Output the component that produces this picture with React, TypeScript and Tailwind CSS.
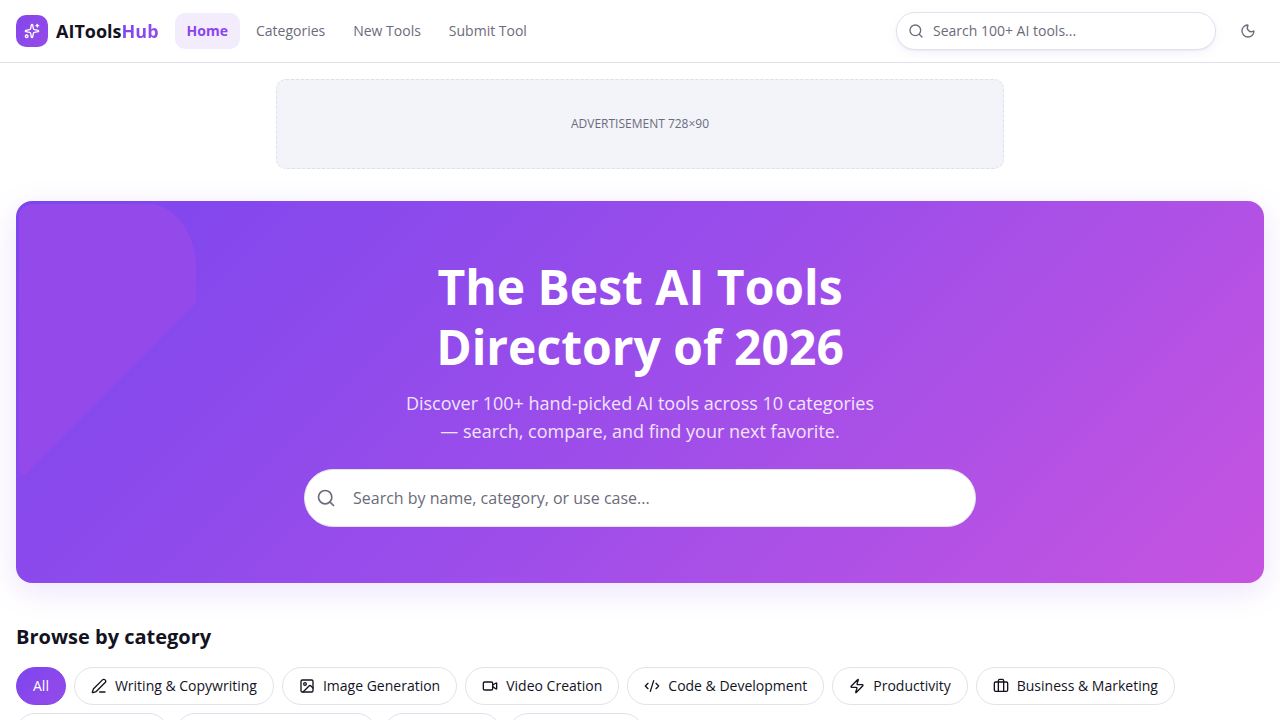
import {
  Briefcase,
  CodeXml,
  GraduationCap,
  Image,
  MessageSquare,
  Microscope,
  Moon,
  Music,
  PenLine,
  Search,
  Sparkles,
  Video,
  Zap,
} from "lucide-react";

const navLinks = ["Home", "Categories", "New Tools", "Submit Tool"];

const categories = [
  { name: "Writing & Copywriting", icon: PenLine },
  { name: "Image Generation", icon: Image },
  { name: "Video Creation", icon: Video },
  { name: "Code & Development", icon: CodeXml },
  { name: "Productivity", icon: Zap },
  { name: "Business & Marketing", icon: Briefcase },
  { name: "Audio & Music", icon: Music },
  { name: "Education & Research", icon: GraduationCap },
  { name: "Chatbots", icon: MessageSquare },
  { name: "Research AI", icon: Microscope },
];

function Header() {
  return (
    <header className="border-b border-[#e2e2ec] bg-white">
      <div className="flex items-center gap-4 px-4 py-3">
        <a href="#" className="flex items-center gap-2">
          <span className="flex size-8 items-center justify-center rounded-[10px] bg-linear-135 from-[#8446ec] to-[#964ae8] text-white">
            <Sparkles className="size-4" />
          </span>
          <span className="text-lg font-bold text-[#13131f]">
            AITools
            <span className="bg-linear-135 from-[#7c45ee] to-[#964ae8] bg-clip-text text-transparent">Hub</span>
          </span>
        </a>

        <nav className="flex items-center gap-1">
          {navLinks.map((label, i) => (
            <a
              key={label}
              href="#"
              className={
                i === 0
                  ? "rounded-[10px] bg-[#f2ecfd] px-3 py-2 text-sm font-bold text-[#8b45ec]"
                  : "rounded-[10px] px-3 py-2 text-sm text-[#6b6b7b]"
              }
            >
              {label}
            </a>
          ))}
        </nav>

        <div className="relative ml-auto w-80">
          <Search className="absolute top-1/2 left-3 size-4 -translate-y-1/2 text-[#6b6b7b]" />
          <input
            type="search"
            aria-label="Search tools"
            placeholder="Search 100+ AI tools..."
            className="block w-full rounded-full border border-[#e2e2ec] bg-white py-2 pr-4 pl-9 text-sm shadow-[0_1px_2px_rgba(20,20,50,0.06),0_4px_12px_rgba(124,58,237,0.06)] placeholder:text-[#6b6b7b]"
          />
        </div>
        <button type="button" aria-label="Toggle theme" className="flex size-8 items-center justify-center text-[#6b6b7b]">
          <Moon className="size-4" />
        </button>
      </div>
    </header>
  );
}

function Hero() {
  return (
    <section className="relative rounded-2xl bg-linear-135 from-[#7c45ee] via-[#9c4dea] to-[#c653e0] px-4 py-14 text-center shadow-[0_8px_32px_rgba(124,58,237,0.14)]">
      {/* Soft shape in the corner */}
      <svg className="absolute top-0 left-0 h-[280px] w-[182px]" viewBox="0 0 182 280" fill="#944aea" aria-hidden="true">
        <path d="M3 12Q6 3 20 3H132C160 3 180 34 180 68V102L9 274Q3 276 3 264Z" />
      </svg>

      <div className="relative">
        <h1 className="mx-auto max-w-xl text-5xl leading-[60px] font-bold text-white">
          The Best AI Tools Directory of 2026
        </h1>
        <p className="mx-auto mt-3 max-w-[480px] text-lg leading-7 text-white/85">
          Discover 100+ hand-picked AI tools across 10 categories — search, compare, and find your next favorite.
        </p>
        <div className="relative mx-auto mt-6 max-w-2xl">
          <Search className="absolute top-1/2 left-3 size-5 -translate-y-1/2 text-[#6b6b7b]" />
          <input
            type="search"
            aria-label="Search by name, category, or use case"
            placeholder="Search by name, category, or use case..."
            className="block w-full rounded-full border border-[#e2e2ec] bg-white py-4 pr-4 pl-12 text-base placeholder:text-[#6b6b7b]"
          />
        </div>
      </div>
    </section>
  );
}

export default function App() {
  return (
    <div className="min-h-screen bg-white font-['Open_Sans',sans-serif] text-[#13131f]">
      <Header />
      <main className="px-4 py-4">
        <div className="mx-auto flex h-[90px] max-w-[728px] items-center justify-center rounded-[10px] border border-dashed border-[#dfdfea] bg-[#f3f4f9] text-xs text-[#6b6b7b]">
          ADVERTISEMENT 728×90
        </div>

        <div className="mt-8">
          <Hero />
        </div>

        <section className="mt-10">
          <h2 className="text-xl leading-7 font-bold">Browse by category</h2>
          <div className="mt-4 flex flex-wrap gap-2">
            <button
              type="button"
              className="rounded-full border border-[#8446ec] bg-linear-135 from-[#7c45ee] to-[#964ae8] px-4 py-2 text-sm text-white"
            >
              All
            </button>
            {categories.map(({ name, icon: Icon }) => (
              <button
                key={name}
                type="button"
                className="flex items-center gap-2 rounded-full border border-[#e2e2ec] bg-white px-4 py-2 text-sm"
              >
                <Icon className="size-4" />
                {name}
              </button>
            ))}
          </div>
        </section>
      </main>
    </div>
  );
}
